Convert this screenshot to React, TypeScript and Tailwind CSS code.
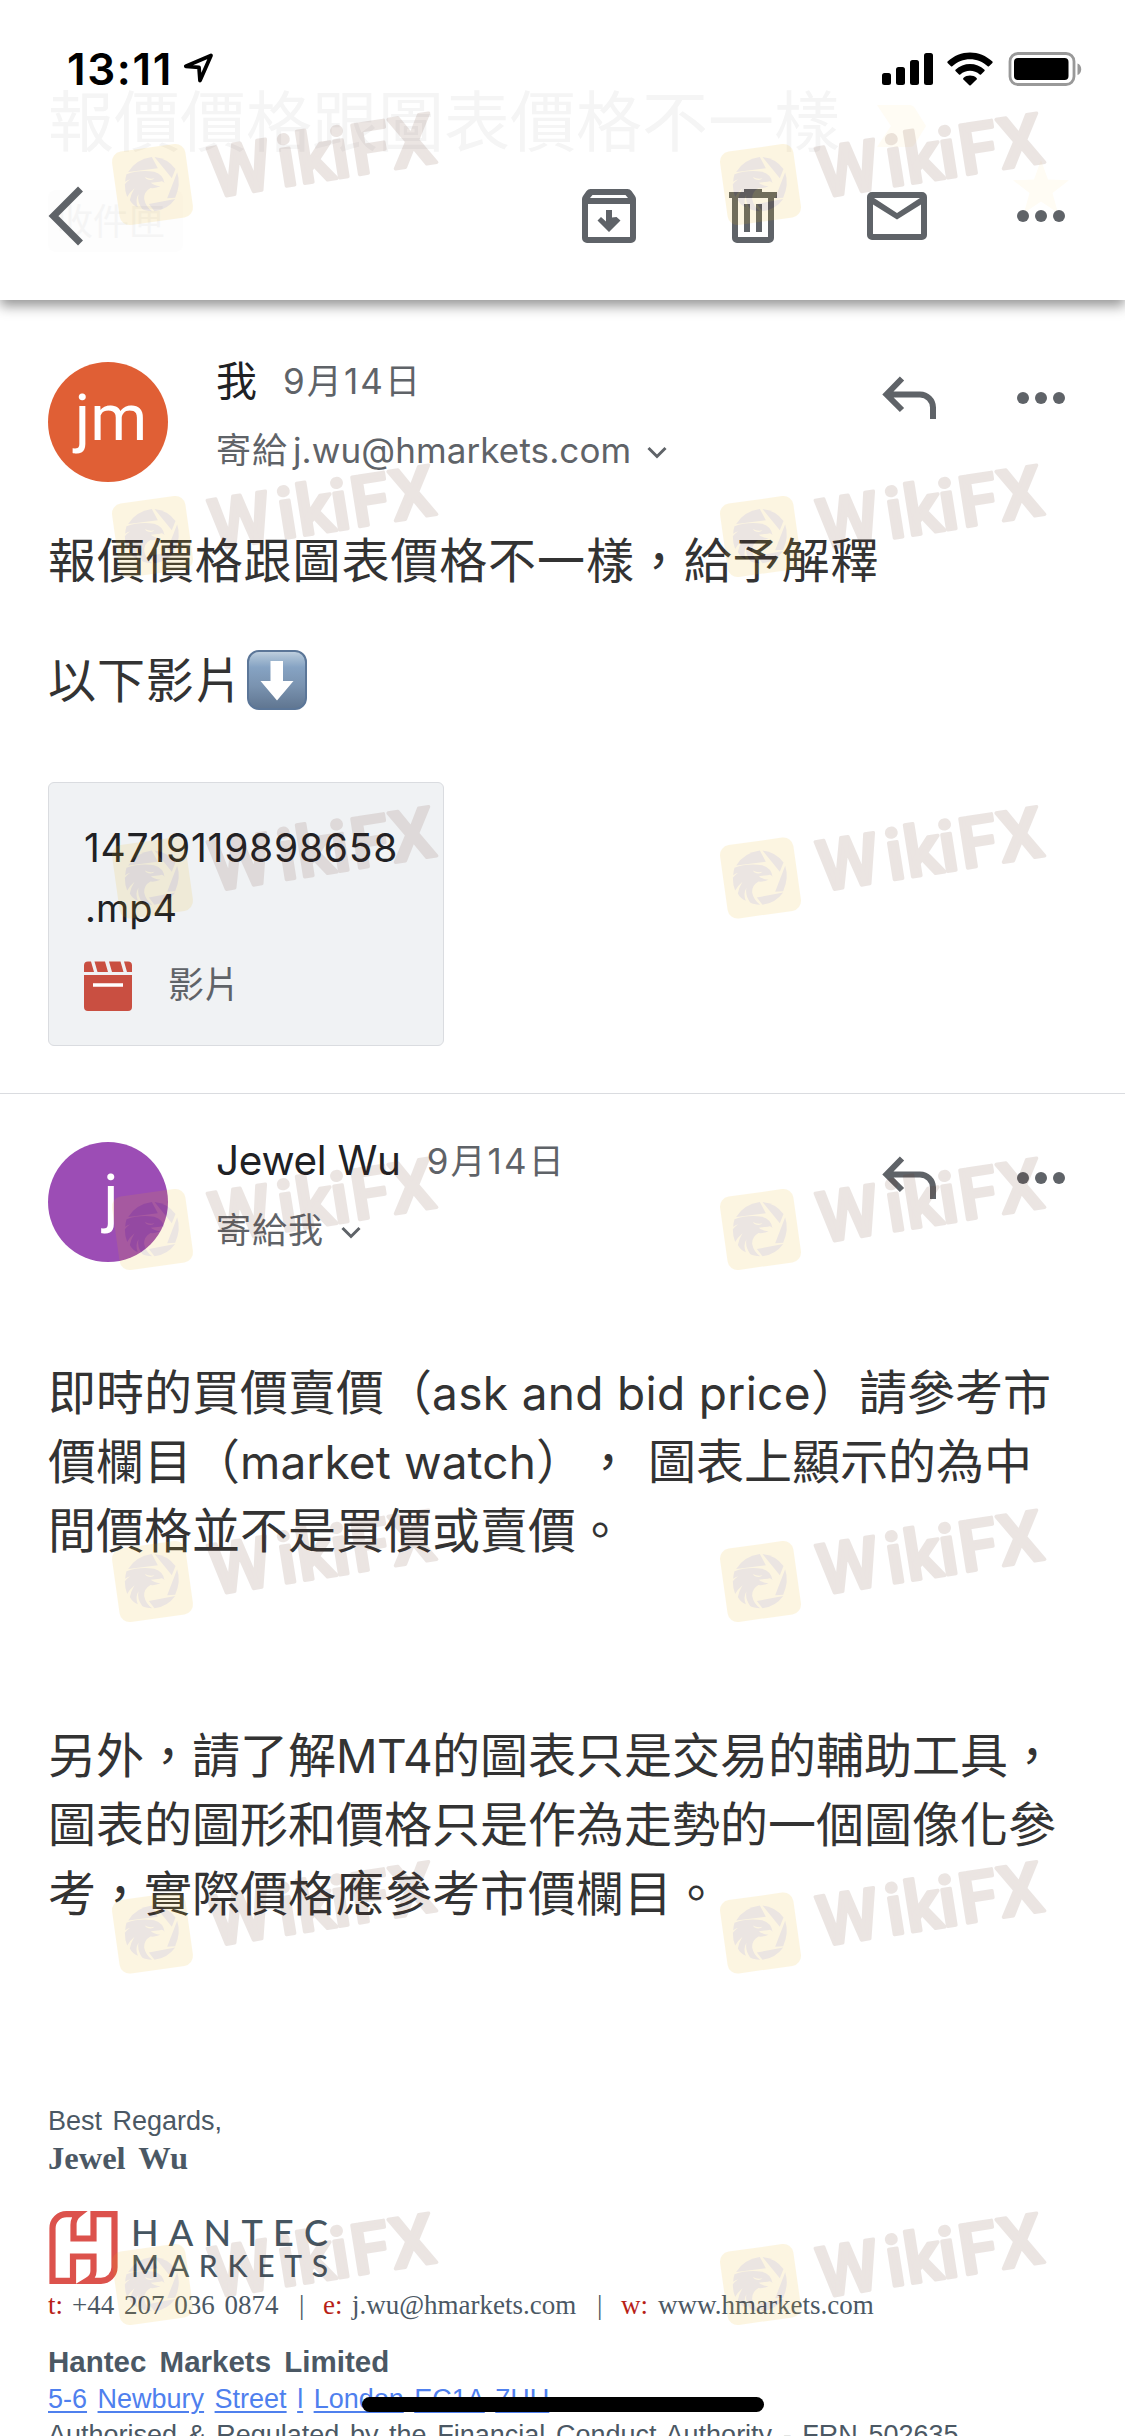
import type { ReactNode } from "react";

const SANS = "font-['Inter','Noto_Sans_CJK_TC',sans-serif]";
const CJK = "font-['Noto_Sans_CJK_TC',sans-serif] [text-spacing-trim:space-all]";

const WATERMARK_ROWS = [184.5, 536.5, 878, 1229.5, 1581.5, 1933, 2284.5];
const WATERMARK_COLUMNS = [152.5, 760.5];

function StatusBar() {
  return (
    <div className="flex h-[140px] items-start justify-between pl-[67px] pr-[42px] pt-[52px]">
      <div className="flex h-[34px] items-center">
        <span className="text-[44px] font-semibold leading-none tracking-[1.6px] text-black">13:11</span>
        <svg className="ml-[10px]" width="32" height="32" viewBox="0 0 32 32" fill="none">
          <path d="M28 2.500 2.800 13.300 16 14.300 17 27.500Z" stroke="#000" strokeWidth="3.800" strokeLinejoin="round" />
        </svg>
      </div>
      <div className="flex h-[34px] items-center">
        <svg width="52" height="34" viewBox="0 0 52 34">
          <rect x="1" y="21" width="9" height="12" rx="2.5" />
          <rect x="15" y="15" width="9" height="18" rx="2.5" />
          <rect x="29" y="8" width="9" height="25" rx="2.5" />
          <rect x="43" y="1" width="9" height="32" rx="2.5" />
        </svg>
        <svg className="ml-[14px]" width="46" height="34" viewBox="0 0 46 34">
          <path d="M0.6 9.6C13-2.6 33-2.6 45.4 9.6a1 1 0 0 1 0 1.3L42 14.3a1 1 0 0 1-1.3 0C31 4.900 15 4.900 5.300 14.300a1 1 0 0 1-1.300 0L.6 10.900a1 1 0 0 1 0-1.300Z" />
          <path d="M8.500 17.800C16.500 10 29.500 10 37.500 17.800a1 1 0 0 1 0 1.300L34 22.500a1 1 0 0 1-1.300 0c-5.400-5-14-5-19.400 0a1 1 0 0 1-1.300 0L8.500 19.100a1 1 0 0 1 0-1.300Z" />
          <path d="M16.400 26c3.700-3.200 9.500-3.200 13.200 0a1 1 0 0 1 0 1.400L23.700 33.200a1 1 0 0 1-1.400 0L16.400 27.400a1 1 0 0 1 0-1.400Z" />
        </svg>
        <svg className="ml-[15px]" width="75" height="34" viewBox="0 0 75 34">
          <rect x="2" y="1.500" width="64" height="31" rx="8" fill="none" stroke="#999" strokeWidth="2.800" />
          <rect x="6" y="6" width="54.500" height="22" rx="4" />
          <path d="M69.500 11.500c5 1.500 5 10 0 11.500Z" fill="#999" />
        </svg>
      </div>
    </div>
  );
}

function MoreDots() {
  return (
    <svg width="48" height="12" viewBox="0 0 48 12" fill="#5f6368">
      <circle cx="6" cy="6" r="6" />
      <circle cx="24" cy="6" r="6" />
      <circle cx="42" cy="6" r="6" />
    </svg>
  );
}

function Toolbar() {
  return (
    <div className="flex h-[152px] items-center pl-[48px] pr-[60px]">
      <svg width="36" height="60" viewBox="0 0 36 60" fill="none">
        <path d="M32.500 3 5.500 30 32.500 57" stroke="#5f6368" strokeWidth="7" />
      </svg>
      <svg className="ml-[498px]" width="54" height="54" viewBox="0 0 54 54" fill="#5f6368">
        <path
          fillRule="evenodd"
          d="M8.500 0h37a5 5 0 0 1 4 2L53 7a6 6 0 0 1 1 3.500V49a5 5 0 0 1-5 5H5a5 5 0 0 1-5-5V10.500A6 6 0 0 1 1 7l3.500-5a5 5 0 0 1 4-2ZM10.500 6 8 9h38l-2.500-3ZM6 15v33h42V15Z"
        />
        <path d="M24 21h6v7.500l4.500-0.500L38.500 31.500 27 43 15.500 31.500 19 28l5 4.500Z" />
      </svg>
      <svg className="ml-[93px]" width="48" height="54" viewBox="0 0 48 54" fill="#5f6368">
        <path d="M15 0h18v3h15v6H0V3h15Z" />
        <path fillRule="evenodd" d="M3 9h42v40a5 5 0 0 1-5 5H8a5 5 0 0 1-5-5ZM9 9v39h30V9Z" />
        <path d="M15 15h6v28h-6ZM27 15h6v28h-6Z" />
      </svg>
      <svg className="ml-[90px]" width="60" height="48" viewBox="0 0 60 48" fill="#5f6368">
        <path
          fillRule="evenodd"
          d="M5 0h50a5 5 0 0 1 5 5v38a5 5 0 0 1-5 5H5a5 5 0 0 1-5-5V5a5 5 0 0 1 5-5ZM6 12.500V42h48V12.500L30 27.500ZM7 6l23 15L53 6Z"
        />
      </svg>
      <div className="ml-auto">
        <MoreDots />
      </div>
    </div>
  );
}

/* The thread's subject and inbox chip, showing faintly through the bar. */
function FadedSubject() {
  return (
    <div className="absolute inset-0 pl-[48px] pt-[77px]">
      <div className={`${CJK} h-[80px] whitespace-nowrap text-[66px] leading-[80px] text-[#f5f5f5]`}>
        報價價格跟圖表價格不一樣
      </div>
      <div
        className={`${CJK} mt-[33px] flex h-[62px] w-[135px] items-center rounded-[8px] bg-[#fdfdfd] pb-[5px] pl-[9px] text-[36px] leading-none text-[#f5f5f5]`}
      >
        收件匣
      </div>
      <svg className="absolute left-[877px] top-[105px]" width="50" height="42" viewBox="0 0 50 42" fill="#fffcf4">
        <path d="M0 0h33q3 0 4.500 2.500L49 21 37.500 39.500Q36 42 33 42H0l14-21Z" />
      </svg>
      <svg className="absolute left-[1012px] top-[160px]" width="58" height="54" viewBox="0 0 58 54" fill="#fffcf4">
        <path d="m29 0 7 19.500 21 .8L40.500 33 46 53 29 41.500 12 53l5.500-20L1 20.300l21-.8Z" />
      </svg>
    </div>
  );
}

function ReplyIcon() {
  return (
    <svg width="54" height="43" viewBox="0 0 54 43" fill="none" stroke="#5f6368" strokeWidth="6">
      <path d="M20 2.500 4.500 18.500 20 34M4.500 18.500H38a13 13 0 0 1 13 13V43" />
    </svg>
  );
}

function Chevron() {
  return (
    <svg width="20" height="14" viewBox="0 0 20 14" fill="none">
      <path d="M1.500 2 10 10.500 18.500 2" stroke="#5f6368" strokeWidth="3" />
    </svg>
  );
}

function MessageHeader(props: {
  initials: string;
  avatarClass: string;
  name: ReactNode;
  recipient: ReactNode;
}) {
  return (
    <div className="flex h-[120px] pr-[60px]">
      <div
        className={`flex h-[120px] w-[120px] items-center justify-center rounded-full pb-[8px] pl-[6px] font-['Roboto',sans-serif] text-[65px] leading-none text-white ${props.avatarClass}`}
      >
        {props.initials}
      </div>
      <div className="-mt-[6px] ml-[48px]">
        <div className="flex h-[50px] items-center whitespace-nowrap leading-none">
          {props.name}
          <span className="ml-[26px] text-[35px] leading-none tracking-[2.1px] text-[#5f6368]">9月14日</span>
        </div>
        <div className="mt-[19px] flex h-[50px] items-center whitespace-nowrap text-[35px] leading-none text-[#5f6368]">
          {props.recipient}
        </div>
      </div>
      <div className="ml-auto flex items-start">
        <div className="pt-[14px]">
          <ReplyIcon />
        </div>
        <div className="ml-[81px] pt-[30px]">
          <MoreDots />
        </div>
      </div>
    </div>
  );
}

function DownArrowEmoji() {
  return (
    <svg className="ml-[3px] mt-[6px]" width="60" height="60" viewBox="0 0 60 60">
      <defs>
        <linearGradient id="key" x1="0" y1="0" x2="0" y2="1">
          <stop offset="0" stopColor="#c3d2e0" />
          <stop offset="0.100" stopColor="#a9bfd4" />
          <stop offset="0.280" stopColor="#86a3c3" />
          <stop offset="0.600" stopColor="#7a93b0" />
          <stop offset="1" stopColor="#5f7590" />
        </linearGradient>
      </defs>
      <rect x="1" y="1" width="58" height="58" rx="11" fill="url(#key)" stroke="#5b7698" strokeWidth="2" />
      <path d="M23.500 11h12.500v20h10.500L30 50.500 13.500 31h10Z" fill="#fff" />
    </svg>
  );
}

function Attachment() {
  return (
    <div className="mt-[74px] h-[264px] w-[396px] rounded-[6px] border border-[#dadce0] bg-[#f0f2f4] pl-[35px] pt-[34px] text-[#202124]">
      <div className="h-[61px] text-[39px] leading-[61px] tracking-[0.75px]">14719119898658</div>
      <div className="h-[61px] pl-[1px] text-[38px] leading-[61px]">.mp4</div>
      <div className="mt-[21px] flex items-center">
        <svg width="48" height="51" viewBox="0 0 48 51">
          <path
            d="M4 1.500h3L10 12H0V5.500a4 4 0 0 1 4-4ZM10.500 1.500H21L24 12H13.500ZM25 1.500h11.500l3 10.500H28ZM40 1.500h4a4 4 0 0 1 4 4V12h-5ZM0 15h48v32a4 4 0 0 1-4 4H4a4 4 0 0 1-4-4Z"
            fill="#c94f41"
          />
          <path d="M9 25h30" stroke="#fff" strokeWidth="3.500" />
        </svg>
        <span className={`${CJK} ml-[36px] pb-[7px] text-[36px] leading-none text-[#5f6368]`}>影片</span>
      </div>
    </div>
  );
}

function HantecLogo() {
  return (
    <div className="mt-[35px] flex h-[73px] pl-[1px]">
      <svg width="69" height="73" viewBox="0 0 69 73" fill="none" stroke="#dc524c" strokeWidth="6.200">
        <path d="M29.500 3.200H17.500A14 14 0 0 0 3.500 17.200V69.800H24V45.500H44.500V60Q44.500 66 38 69.800H52A13.500 13.500 0 0 0 65.500 56.300V3.200H44.500V27.500H24.500V14Q24.500 7 29.500 3.200Z" />
      </svg>
      <div className="ml-[13px] flex w-[197px] flex-col pt-[8px] font-['Lato',sans-serif] font-medium text-[#455561]">
        <div className="flex h-[26px] items-center justify-between text-[36px] leading-none">
          {"HANTEC".split("").map((c, i) => (
            <span key={i}>{c}</span>
          ))}
        </div>
        <div className="mt-[9px] flex h-[21px] items-center justify-between text-[30px] leading-none">
          {"MARKETS".split("").map((c, i) => (
            <span key={i}>{c}</span>
          ))}
        </div>
      </div>
    </div>
  );
}

function Signature() {
  return (
    <div className="mt-[179px] whitespace-nowrap font-['Liberation_Sans',sans-serif] text-[27px] leading-[36px] text-[#4b5864]">
      <div className="h-[36px] [word-spacing:3px]">Best Regards,</div>
      <div className="mt-[1px] h-[36px] font-['Liberation_Serif',serif] text-[32.5px] font-bold [word-spacing:5px]">
        Jewel Wu
      </div>
      <HantecLogo />
      <div className="mt-[6px] flex h-[30px] items-center font-['Liberation_Serif',serif] text-[27px] leading-none">
        <span className="w-[24px] text-[#b81f17]">t:</span>
        <span className="w-[227px] [word-spacing:3px]">+44 207 036 0874</span>
        <span className="w-[24px]">|</span>
        <span className="w-[29px] text-[#b81f17]">e:</span>
        <span className="w-[245px]">j.wu@hmarkets.com</span>
        <span className="w-[24px]">|</span>
        <span className="w-[37px] text-[#b81f17]">w:</span>
        <span>www.hmarkets.com</span>
      </div>
      <div className="mt-[24px] h-[36px] text-[29.5px] font-bold [word-spacing:5px]">Hantec Markets Limited</div>
      <div className="mt-[1px] flex h-[36px] gap-[10.5px] text-[#4f80ee]">
        {["5-6", "Newbury", "Street", "l", "London", "EC1A", "7HU"].map((w) => (
          <span key={w} className="underline decoration-[1.5px] underline-offset-[3px]">
            {w}
          </span>
        ))}
      </div>
      <div className="h-[36px] [word-spacing:3.1px]">
        Authorised &amp; Regulated by the Financial Conduct Authority - FRN 502635
      </div>
    </div>
  );
}

/* Drawn around the badge centre at three units to the pixel. */
function WatermarkBadge() {
  return (
    <g transform="scale(0.3333) translate(-181 -358.500)">
      <rect x="70" y="247.500" width="222" height="222" rx="30" transform="rotate(-8 181 358.500)" fill="#eeb40f" />
      <g fill="#612f1e">
        <path d="M108 321Q131 283 179 276L197 310Z" />
        <path d="M187 276Q226 280 250 312L239 340Z" />
        <path d="M255 322Q267 358 249 398L225 400Z" />
        <path d="M170 417 249 402Q226 434 187 439Z" />
        <path d="M103 328Q140 314 186 320Q214 328 217 355Q212 346 203 350L176 353Q182 360 205 364Q190 371 175 369Q155 380 156 402Q160 424 180 439Q160 438 150 432Q134 410 139 388Q128 405 137 427Q120 420 113 405Q116 388 127 370Q112 383 105 396Q98 380 98 358Q104 350 114 343Q106 346 99 350Q100 338 103 328Z" />
      </g>
      <path d="M158 336Q172 344 187 340Q178 350 162 341Z" fill="#eeb40f" />
    </g>
  );
}

function WatermarkLogo({ x, y }: { x: number; y: number }) {
  return (
    <g transform={`translate(${x} ${y})`} opacity="0.12">
      <WatermarkBadge />
      <g transform="translate(62 13) rotate(-9)">
        <text
          x="-1 68 87 122 142 182"
          y="0"
          fontFamily="Roboto, sans-serif"
          fontWeight="500"
          fontSize="70"
          fill="#612f1e"
          stroke="#612f1e"
          strokeWidth="3.500"
          strokeLinejoin="round"
        >
          WikiFX
        </text>
      </g>
    </g>
  );
}

function Watermark() {
  return (
    <svg className="pointer-events-none absolute inset-0" width="1125" height="2436" viewBox="0 0 1125 2436">
      {WATERMARK_ROWS.map((y) => WATERMARK_COLUMNS.map((x) => <WatermarkLogo key={`${x}-${y}`} x={x} y={y} />))}
    </svg>
  );
}

export default function App() {
  return (
    <div lang="zh-Hant" className={`${SANS} relative h-[2436px] w-[1125px] overflow-hidden bg-white`}>
      <header className="relative h-[300px] bg-white shadow-[0_6px_12px_rgba(0,0,0,0.42)]">
        <FadedSubject />
        <div className="relative">
          <StatusBar />
          <Toolbar />
        </div>
      </header>

      <main>
        <section className="h-[793px] px-[48px] pt-[62px]">
          <div className="-mr-[48px]">
            <MessageHeader
              initials="jm"
              avatarClass="bg-[#e05f35]"
              name={<span className="text-[41px] leading-none text-[#202124]">我</span>}
              recipient={
                <>
                  <span className="tracking-[1px]">寄給</span>
                  <span className="ml-[5px] tracking-[0.1px]">j.wu@hmarkets.com</span>
                  <span className="ml-[16px] pt-[6px]">
                    <Chevron />
                  </span>
                </>
              }
            />
          </div>
          <div className={`${CJK} text-[48px] leading-[60px] tracking-[0.9px] text-[#333]`}>
            <div className="mt-[45px] h-[60px] whitespace-nowrap">報價價格跟圖表價格不一樣，給予解釋</div>
            <div className="mt-[60px] flex h-[60px] items-center">
              <span>以下影片</span>
              <DownArrowEmoji />
            </div>
          </div>
          <div className="pt-[1px]">
            <Attachment />
          </div>
        </section>

        <section className="border-t border-[#dadce0] px-[48px] pt-[48px]">
          <div className="-mr-[48px]">
            <MessageHeader
              initials="j"
              avatarClass="bg-[#9c4db5]"
              name={<span className="text-[40.5px] leading-none tracking-[-0.3px] text-[#202124]">Jewel Wu</span>}
              recipient={
                <>
                  <span className="tracking-[1px]">寄給我</span>
                  <span className="ml-[17px] pt-[6px]">
                    <Chevron />
                  </span>
                </>
              }
            />
          </div>
          <div className={`${CJK} mt-[93px] whitespace-nowrap text-[48px] leading-[69px] text-[#333]`}>
            <p>
              即時的買價賣價（
              <span className="font-['Inter'] text-[46px] leading-none tracking-[0.33px]">ask and bid price</span>
              ）請參考市
            </p>
            <p>
              價欄目（
              <span className="font-['Inter'] text-[46px] leading-none tracking-[0.1px]">market watch</span>
              ），<span className="ml-[16px]">圖表上顯示的為中</span>
            </p>
            <p>間價格並不是買價或賣價。</p>
            <p className="mt-[156px]">
              另外，請了解
              <span className="font-['Inter'] text-[46px] leading-none tracking-[-0.6px]">MT4</span>
              的圖表只是交易的輔助工具，
            </p>
            <p>圖表的圖形和價格只是作為走勢的一個圖像化參</p>
            <p>考，實際價格應參考市價欄目。</p>
          </div>
          <div className="-mt-[1px]">
            <Signature />
          </div>
        </section>
      </main>

      <Watermark />
      <div className="absolute bottom-[24px] left-[362px] h-[15px] w-[402px] rounded-full bg-black" />
    </div>
  );
}
